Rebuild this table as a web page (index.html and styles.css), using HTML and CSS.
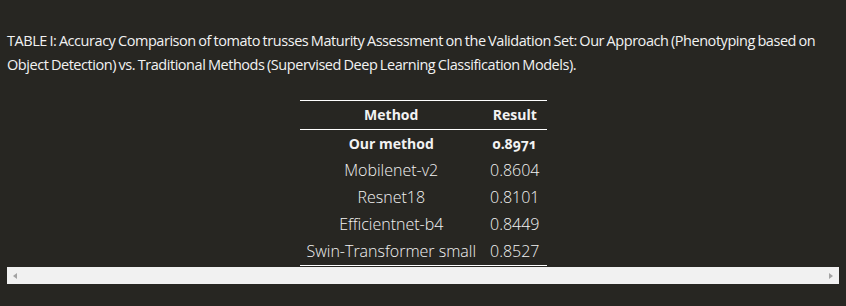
FILE: index.html
```html
<!DOCTYPE html>
<html lang="en">
<head>
<meta charset="utf-8">
<title>Table I</title>
<link rel="stylesheet" href="styles.css">
</head>
<body>
<div class="page">
  <p class="caption">TABLE I: Accuracy Comparison of tomato trusses Maturity Assessment on the Validation Set: Our Approach (Phenotyping based on Object Detection) vs. Traditional Methods (Supervised Deep Learning Classification Models).</p>
  <div class="scroller">
    <table class="results">
      <thead>
        <tr><th>Method</th><th>Result</th></tr>
      </thead>
      <tbody>
        <tr class="best"><td>Our method</td><td>0.8971</td></tr>
        <tr><td>Mobilenet-v2</td><td>0.8604</td></tr>
        <tr><td>Resnet18</td><td>0.8101</td></tr>
        <tr><td>Efficientnet-b4</td><td>0.8449</td></tr>
        <tr><td>Swin-Transformer small</td><td>0.8527</td></tr>
      </tbody>
    </table>
    <div class="hbar" aria-hidden="true">
      <span class="arrow arrow-left"></span>
      <span class="arrow arrow-right"></span>
    </div>
  </div>
</div>
</body>
</html>
```
FILE: styles.css
```css
html, body {
  margin: 0;
  padding: 0;
  background: #272622;
}
.page {
  padding: 0 7px;
  color: #f2f2f2;
  font-family: "Open Sans", "Liberation Sans", sans-serif;
}
.caption {
  margin: 29px 0 0;
  font-size: 14.5px;
  line-height: 24px;
  letter-spacing: -0.45px;
  word-spacing: -0.8px;
}
.scroller {
  margin-top: 23px;
}
.hbar {
  height: 17px;
  margin-top: 1px;
  background: #f1f1f1;
  display: flex;
  justify-content: space-between;
  align-items: center;
  padding: 0 6px;
}
.arrow {
  width: 0;
  height: 0;
  border-top: 3.5px solid transparent;
  border-bottom: 3.5px solid transparent;
}
.arrow-left {
  border-right: 4px solid #a3a3a3;
}
.arrow-right {
  border-left: 4px solid #a3a3a3;
}
.results {
  margin: 0 auto;
  border-collapse: collapse;
  border-top: 1px solid #ffffff;
  border-bottom: 1px solid #ffffff;
}
.results th {
  font-weight: 700;
  font-size: 14px;
  line-height: 20px;
  padding: 4px 7px;
  border-bottom: 1px solid #ffffff;
  text-align: center;
}
.results td {
  font-weight: 300;
  font-size: 16px;
  line-height: 27px;
  padding: 0 7px;
  text-align: center;
}
.results tr.best td {
  font-weight: 700;
  font-size: 14px;
  font-variant-numeric: oldstyle-nums;
}
```
